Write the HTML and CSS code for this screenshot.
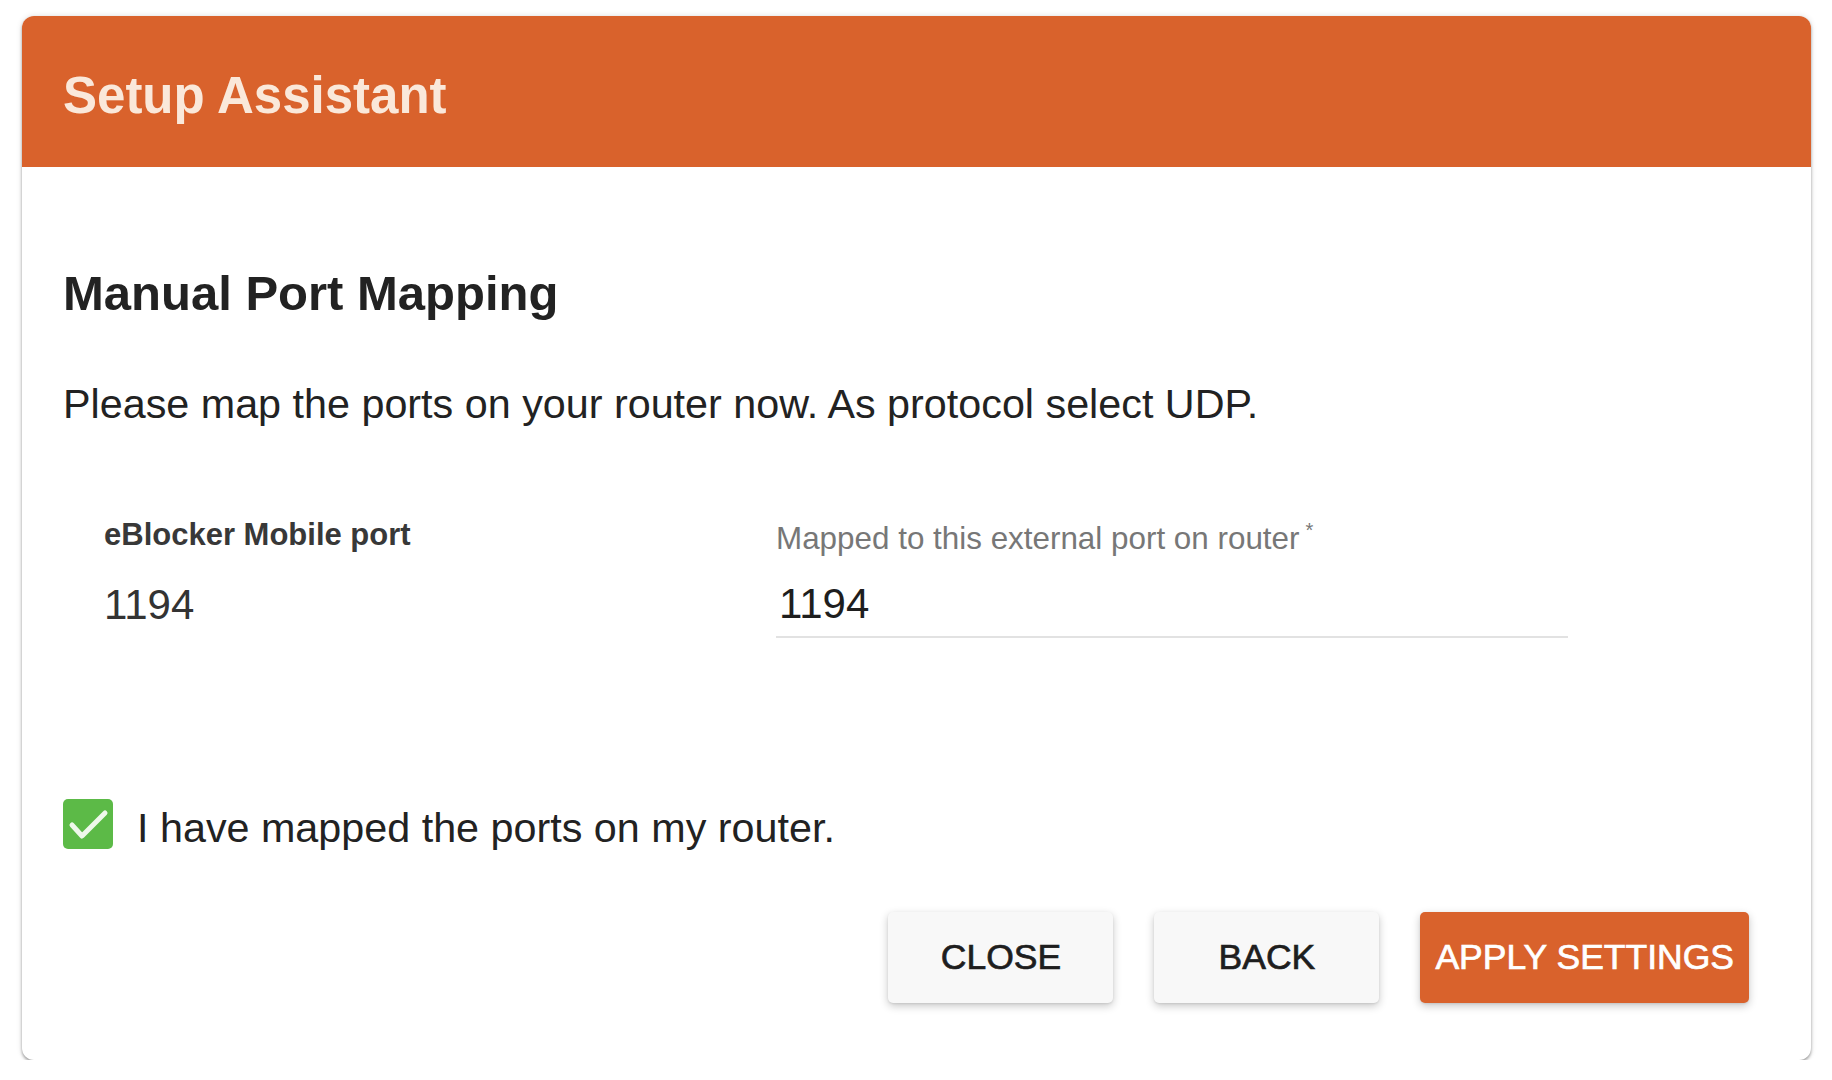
FILE: index.html
```html
<!DOCTYPE html>
<html lang="en">
<head>
    <meta charset="UTF-8">
    <meta name="viewport" content="width=device-width, initial-scale=1.0">
    <title>Setup Assistant</title>
    <link rel="stylesheet" href="styles.css">
</head>
<body>
    <div class="dialog">
        <div class="dialog-header">
            <h1>Setup Assistant</h1>
        </div>

        <div class="dialog-content">
            <h2>Manual Port Mapping</h2>
            <p class="intro">Please map the ports on your router now. As protocol select UDP.</p>

            <div class="port-row">
                <div class="port-col">
                    <label class="static-label">eBlocker Mobile port</label>
                    <div class="static-value">1194</div>
                </div>
                <div class="port-col port-col-input">
                    <label class="field-label" for="externalPort">Mapped to this external port on router<span class="req">*</span></label>
                    <input type="text" id="externalPort" class="field-input" value="1194">
                </div>
            </div>

            <label class="check-row">
                <span class="checkbox">
                    <svg viewBox="0 0 50 50" width="50" height="50">
                        <polyline points="9,26 19,37 42,14" fill="none" stroke="#eef8ea" stroke-width="5" stroke-linecap="round" stroke-linejoin="round"/>
                    </svg>
                </span>
                <span class="check-text">I have mapped the ports on my router.</span>
            </label>
        </div>

        <div class="dialog-actions">
            <button type="button" class="btn">Close</button>
            <button type="button" class="btn">Back</button>
            <button type="button" class="btn btn-primary">Apply Settings</button>
        </div>
    </div>
</body>
</html>
```

FILE: styles.css
```css
body {
    font-family: "Liberation Sans", Arial, sans-serif;
    background-color: #fff;
    color: #222;
    margin: 0;
    padding: 16px 21px 0 22px;
}
.dialog {
    background-color: #fff;
    border-radius: 12px;
    box-shadow: 0 2px 3px rgba(0, 0, 0, 0.35), 0 0 6px rgba(0, 0, 0, 0.12);
    overflow: hidden;
}
.dialog-header {
    background-color: #d9622c;
    height: 151px;
    box-sizing: border-box;
    padding: 8px 41px 0 41px;
    display: flex;
    align-items: center;
}
.dialog-header h1 {
    margin: 0;
    color: #fae8da;
    font-size: 51px;
    line-height: 60px;
    font-weight: bold;
}
.dialog-content {
    padding: 96px 41px 0 41px;
}
h2 {
    margin: 0;
    font-size: 49px;
    line-height: 60px;
    font-weight: bold;
    color: #222;
}
.intro {
    margin: 56px 0 0 0;
    font-size: 41.3px;
    line-height: 50px;
    color: #222;
}
.port-row {
    display: grid;
    grid-template-columns: 672px 792px;
    margin: 87px 0 0 41px;
}
.static-label {
    display: block;
    font-size: 31px;
    line-height: 38px;
    font-weight: bold;
    color: #383838;
}
.static-value {
    margin-top: 27px;
    font-size: 42px;
    line-height: 48px;
    color: #333;
}
.port-col-input {
    padding-top: 4px;
}
.field-label {
    display: block;
    font-size: 31.4px;
    line-height: 38px;
    color: #777;
}
.req {
    font-size: 20px;
    vertical-align: top;
    margin-left: 6px;
    line-height: 20px;
}
.field-input {
    display: block;
    width: 100%;
    height: 58px;
    box-sizing: border-box;
    margin-top: 22px;
    padding: 0 0 8px 3px;
    border: none;
    border-bottom: 2px solid #e2e2e2;
    font-family: inherit;
    font-size: 42px;
    color: #1e1e1e;
    background: transparent;
    outline: none;
}
.check-row {
    display: flex;
    align-items: flex-start;
    gap: 24px;
    margin-top: 161px;
    cursor: pointer;
}
.checkbox {
    width: 50px;
    height: 50px;
    border-radius: 5px;
    background-color: #5cba47;
    flex-shrink: 0;
}
.checkbox svg {
    display: block;
}
.check-text {
    margin-top: 4px;
    font-size: 41.3px;
    line-height: 50px;
    color: #222;
}
.dialog-actions {
    display: flex;
    justify-content: flex-end;
    gap: 41px;
    padding: 59px 62px 57px 0;
}
.btn {
    min-width: 225px;
    height: 91px;
    padding: 0 15px;
    border: none;
    border-radius: 5px;
    background-color: #f8f8f8;
    color: #1e1e1e;
    font-family: inherit;
    font-size: 35.5px;
    text-transform: uppercase;
    -webkit-text-stroke: 0.7px currentColor;
    box-shadow: 0 3px 8px rgba(0, 0, 0, 0.22), 0 1px 2px rgba(0, 0, 0, 0.08);
    cursor: pointer;
}
.btn-primary {
    background-color: #d9622c;
    color: #fff;
}
```
